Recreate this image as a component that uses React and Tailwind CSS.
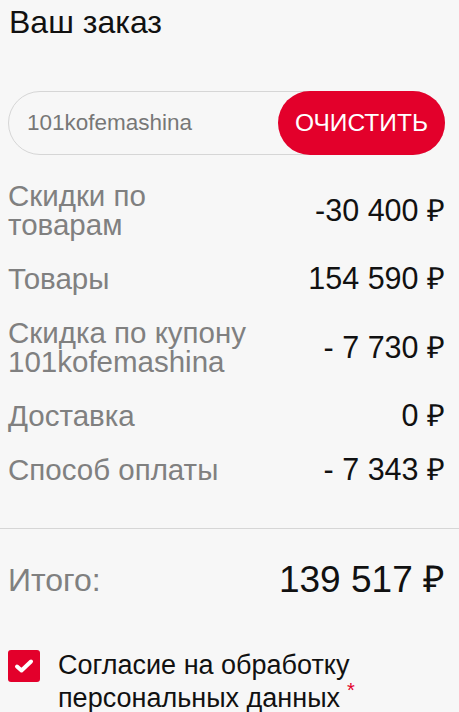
import React, { useState } from 'react';

const rows = [
    { label: ['Скидки по', 'товарам'], value: '-30 400 ₽' },
    { label: ['Товары'], value: '154 590 ₽' },
    { label: ['Скидка по купону', '101kofemashina'], value: '- 7 730 ₽' },
    { label: ['Доставка'], value: '0 ₽' },
    { label: ['Способ оплаты'], value: '- 7 343 ₽' },
];

function App() {
    const [coupon, setCoupon] = useState('101kofemashina');
    const [agree, setAgree] = useState(true);

    return (
        <div className="min-h-screen bg-[#f7f7f7] font-['Liberation_Sans',Arial,sans-serif] text-[#111]">
            <div className="pl-2 pr-[14px]">
                <h2 className="pt-[4px] text-[32px] leading-[36px] pl-px">Ваш заказ</h2>

                <div className="mt-[51px] flex h-[64px] items-center rounded-full border border-[#d6d6d6]">
                    <input
                        value={coupon}
                        onChange={(e) => setCoupon(e.target.value)}
                        className="min-w-0 flex-1 bg-transparent pl-[18px] text-[22.5px] text-[#777] outline-none"
                    />
                    <button
                        onClick={() => setCoupon('')}
                        className="-my-px -mr-px h-[64px] w-[167px] rounded-full bg-[#e3002b] text-[24.5px] uppercase text-white"
                    >
                        Очистить
                    </button>
                </div>

                <div className="mt-[26px] flex flex-col gap-[25px]">
                    {rows.map((row, i) => (
                        <div key={i} className="flex items-center justify-between">
                            <div className="text-[29.5px] leading-[29px] text-[#808080]">
                                {row.label.map((l, j) => (
                                    <div key={j}>{l}</div>
                                ))}
                            </div>
                            <div className="text-[30.5px] leading-[29px]">{row.value}</div>
                        </div>
                    ))}
                </div>
            </div>

            <div className="mt-[44px] border-t border-[#d6d6d6]" />

            <div className="pl-2 pr-[14px]">
                <div className="mt-[31px] flex items-center justify-between">
                    <span className="text-[32px] leading-[40px] text-[#808080]">Итого:</span>
                    <span className="text-[37px] leading-[40px]">139 517 ₽</span>
                </div>

                <label className="mt-[49px] flex items-start gap-[18px]">
                    <button
                        onClick={() => setAgree(!agree)}
                        className={`mt-px flex h-[32px] w-[32px] shrink-0 items-center justify-center rounded-[3px] ${agree ? 'bg-[#e3002b]' : 'border border-gray-400'}`}
                    >
                        {agree && (
                            <svg width="20" height="16" viewBox="0 0 20 16">
                                <path d="M3 8.5 L7.5 12.5 L17 3.5" fill="none" stroke="white" strokeWidth="4" strokeLinecap="round" strokeLinejoin="round" />
                            </svg>
                        )}
                    </button>
                    <span className="text-[27px] leading-[33px]">
                        Согласие на обработку
                        <br />
                        персональных данных<sup className="ml-[7px] text-[20px] text-[#e3002b]">*</sup>
                    </span>
                </label>
            </div>
        </div>
    );
}

export default App;
